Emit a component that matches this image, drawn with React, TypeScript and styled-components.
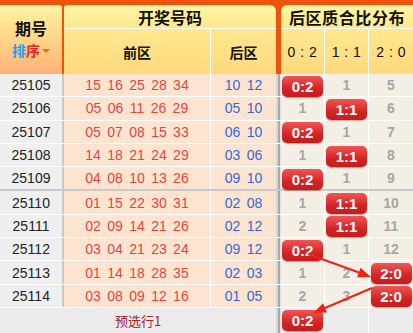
import styled, { createGlobalStyle } from 'styled-components';

const GlobalStyle = createGlobalStyle`
  html, body {
    margin: 0;
    padding: 0;
    background: #ffffff;
  }
  body {
    font-family: "Liberation Sans", "Noto Sans CJK SC", sans-serif;
  }
`;

type Draw = {
	issue: string;
	front: string[];
	back: string[];
	hit: number;
	miss: string[];
};

const RATIOS = ['0:2', '1:1', '2:0'];

const draws: Draw[] = [
	{ issue: '25105', front: ['15', '16', '25', '28', '34'], back: ['10', '12'], hit: 0, miss: ['', '1', '5'] },
	{ issue: '25106', front: ['05', '06', '11', '26', '29'], back: ['05', '10'], hit: 1, miss: ['1', '', '6'] },
	{ issue: '25107', front: ['05', '07', '08', '15', '33'], back: ['06', '10'], hit: 0, miss: ['', '1', '7'] },
	{ issue: '25108', front: ['14', '18', '21', '24', '29'], back: ['03', '06'], hit: 1, miss: ['1', '', '8'] },
	{ issue: '25109', front: ['04', '08', '10', '13', '26'], back: ['09', '10'], hit: 0, miss: ['', '1', '9'] },
	{ issue: '25110', front: ['01', '15', '22', '30', '31'], back: ['02', '08'], hit: 1, miss: ['1', '', '10'] },
	{ issue: '25111', front: ['02', '09', '14', '21', '26'], back: ['02', '12'], hit: 1, miss: ['2', '', '11'] },
	{ issue: '25112', front: ['03', '04', '21', '23', '24'], back: ['09', '12'], hit: 0, miss: ['', '1', '12'] },
	{ issue: '25113', front: ['01', '14', '18', '28', '35'], back: ['02', '03'], hit: 2, miss: ['1', '2', ''] },
	{ issue: '25114', front: ['03', '08', '09', '12', '16'], back: ['01', '05'], hit: 2, miss: ['2', '3', ''] },
];

export default function App() {
	return (
		<Page>
			<GlobalStyle />
			<Head>
				<IssueHead>
					<IssueTitle>期号</IssueTitle>
					<SortLink>
						<SortBlue>排</SortBlue>
						<SortRed>序</SortRed>
						<Caret />
					</SortLink>
				</IssueHead>
				<DrawHead>
					<HeadTitle>开奖号码</HeadTitle>
					<SubRow>
						<FrontSub>前区</FrontSub>
						<BackSub>后区</BackSub>
					</SubRow>
				</DrawHead>
				<RatioHead>
					<HeadTitle $spaced>后区质合比分布</HeadTitle>
					<SubRow>
						{RATIOS.map((r) => (
							<RatioSub key={r}>{r.replace(':', ' : ')}</RatioSub>
						))}
					</SubRow>
				</RatioHead>
			</Head>

			{draws.map((d, i) => (
				<Row key={d.issue} $groupEnd={i === 4}>
					<IssueCell>{d.issue}</IssueCell>
					<Divider />
					<FrontCell>
						{d.front.map((n, k) => (
							<Ball key={k}>{n}</Ball>
						))}
					</FrontCell>
					<BackCell>
						{d.back.map((n, k) => (
							<Ball key={k}>{n}</Ball>
						))}
					</BackCell>
					<Gutter />
					{RATIOS.map((r, k) => (
						<RatioCell key={r} $last={k === 2}>
							{d.hit === k ? <Badge>{r}</Badge> : d.miss[k]}
						</RatioCell>
					))}
				</Row>
			))}

			<Footer>
				<FooterLabel>预选行1</FooterLabel>
				<Gutter />
				<FooterCell>
					<Badge>0:2</Badge>
				</FooterCell>
				<FooterCell />
				<FooterCell $last />
			</Footer>

			<Arrows width="413" height="333" viewBox="0 0 413 333">
				<line x1="308" y1="254" x2="359" y2="272.5" stroke="#ea2418" strokeWidth="2" />
				<polygon points="371,277 357.1,277.2 360.5,267.8" fill="#ea2418" />
				<line x1="372" y1="288" x2="325" y2="308" stroke="#ea2418" strokeWidth="2" />
				<polygon points="313,313 323.1,303.3 327,312.5" fill="#ea2418" />
			</Arrows>
		</Page>
	);
}

const Page = styled.div`
	position: relative;
	width: 413px;
	height: 333px;
	overflow: hidden;
	background: #ebebeb;
`;

const Head = styled.div`
	display: flex;
	height: 74px;
	padding-top: 5px;
	box-sizing: border-box;
	background: #f0520e;
`;

const IssueHead = styled.div`
	width: 62px;
	margin-right: 2px;
	border-top-right-radius: 3px;
	background: linear-gradient(#fff4a2, #ffd88a 45%, #ffb278);
	display: flex;
	flex-direction: column;
	align-items: center;
	padding-top: 15px;
	box-sizing: border-box;
`;

const IssueTitle = styled.div`
	font-family: "Noto Sans CJK SC", sans-serif;
	font-size: 16px;
	font-weight: 700;
	line-height: 17px;
	color: #111;
`;

const SortLink = styled.div`
	display: flex;
	align-items: center;
	height: 15px;
	margin-top: 6px;
	font-family: "Noto Sans CJK SC", sans-serif;
	font-size: 14px;
	font-weight: 700;
	line-height: 15px;
`;

const SortBlue = styled.span`
	color: #2a9cf0;
`;

const SortRed = styled.span`
	color: #e02828;
`;

const Caret = styled.span`
	width: 0;
	height: 0;
	margin-left: 2px;
	border-left: 4px solid transparent;
	border-right: 4px solid transparent;
	border-top: 4px solid #f46a10;
`;

const DrawHead = styled.div`
	width: 212px;
	margin-right: 5px;
	display: flex;
	flex-direction: column;
	border-top-left-radius: 3px;
	border-top-right-radius: 6px;
	overflow: hidden;
`;

const RatioHead = styled.div`
	width: 132px;
	display: flex;
	flex-direction: column;
	border-top-left-radius: 6px;
	overflow: hidden;
`;

const HeadTitle = styled.div<{ $spaced?: boolean }>`
	height: 23px;
	border-bottom: 1px solid #ffffff;
	background: linear-gradient(#fff6a4, #ffe98e);
	font-family: "Noto Sans CJK SC", sans-serif;
	font-size: 16px;
	font-weight: 700;
	line-height: 24px;
	letter-spacing: ${(p) => (p.$spaced ? '0.6px' : '0')};
	color: #111;
	text-align: center;
`;

const SubRow = styled.div`
	flex: 1;
	display: flex;
	background: linear-gradient(#ffe790, #ffd97c);
`;

const SubCell = styled.div`
	display: flex;
	align-items: center;
	justify-content: center;
	color: #111;
`;

const FrontSub = styled(SubCell)`
	width: 146px;
	border-right: 1px solid #ffffff;
	font-family: "Noto Sans CJK SC", sans-serif;
	font-size: 14px;
	font-weight: 700;
`;

const BackSub = styled(SubCell)`
	flex: 1;
	font-family: "Noto Sans CJK SC", sans-serif;
	font-size: 14px;
	font-weight: 700;
`;

const RatioSub = styled(SubCell)`
	width: 44px;
	border-left: 1px solid #ffffff;
	font-size: 14px;
	letter-spacing: 0.5px;
	white-space: pre;

	&:first-child {
		width: 43px;
		border-left: 0;
	}
`;

const Row = styled.div<{ $groupEnd?: boolean }>`
	display: flex;
	height: ${(p) => (p.$groupEnd ? '24.3px' : '23.3px')};
	box-sizing: border-box;
	border-bottom: ${(p) => (p.$groupEnd ? '2px solid #c9c9c9' : '1px solid #ffffff')};
	font-size: 14px;
`;

const IssueCell = styled.div`
	width: 62px;
	display: flex;
	align-items: center;
	justify-content: center;
	background: #efefef;
	color: #222;
`;

const Divider = styled.div`
	width: 2px;
	background: #c8c8c8;
`;

const FrontCell = styled.div`
	width: 146px;
	display: flex;
	align-items: center;
	justify-content: center;
	border-right: 1px solid #ffffff;
	background: #fde4d0;
	color: #e2473f;
`;

const BackCell = styled.div`
	width: 65px;
	display: flex;
	align-items: center;
	justify-content: center;
	background: #fde4d0;
	color: #3468d4;
`;

const Ball = styled.span`
	margin: 0 3.2px;
`;

const Gutter = styled.div`
	width: 5px;
	background: linear-gradient(90deg, #d6d6d6 0 2px, #a9a9a9 2px 4px, #e2e2e2 4px);
`;

const RatioCell = styled.div<{ $last?: boolean }>`
	width: ${(p) => (p.$last ? '44px' : '43px')};
	display: flex;
	align-items: center;
	justify-content: center;
	border-right: ${(p) => (p.$last ? '0' : '1px solid #ffffff')};
	background: #f4efe4;
	color: #a6a6a6;
	font-weight: 700;
`;

const Badge = styled.span`
	width: 41px;
	height: 21px;
	margin-top: 2px;
	display: flex;
	align-items: center;
	justify-content: center;
	border-radius: 5px;
	background: linear-gradient(#f25454, #d42424 60%, #c41c1c);
	box-shadow: 0 1px 1px rgba(120, 0, 0, 0.35);
	color: #ffffff;
	font-size: 15px;
	font-weight: 700;
	position: relative;
	z-index: 1;
`;

const Footer = styled.div`
	display: flex;
	height: 25px;
`;

const FooterLabel = styled.div`
	width: 276px;
	display: flex;
	align-items: center;
	justify-content: center;
	background: #ebebeb;
	font-family: "Noto Sans CJK SC", sans-serif;
	font-size: 13px;
	color: #a0262a;
`;

const FooterCell = styled.div<{ $last?: boolean }>`
	width: ${(p) => (p.$last ? '44px' : '43px')};
	display: flex;
	justify-content: center;
	border-right: ${(p) => (p.$last ? '0' : '1px solid #ffffff')};
	background: #ececec;
`;

const Arrows = styled.svg`
	position: absolute;
	top: 0;
	left: 0;
	z-index: 2;
	pointer-events: none;
`;
